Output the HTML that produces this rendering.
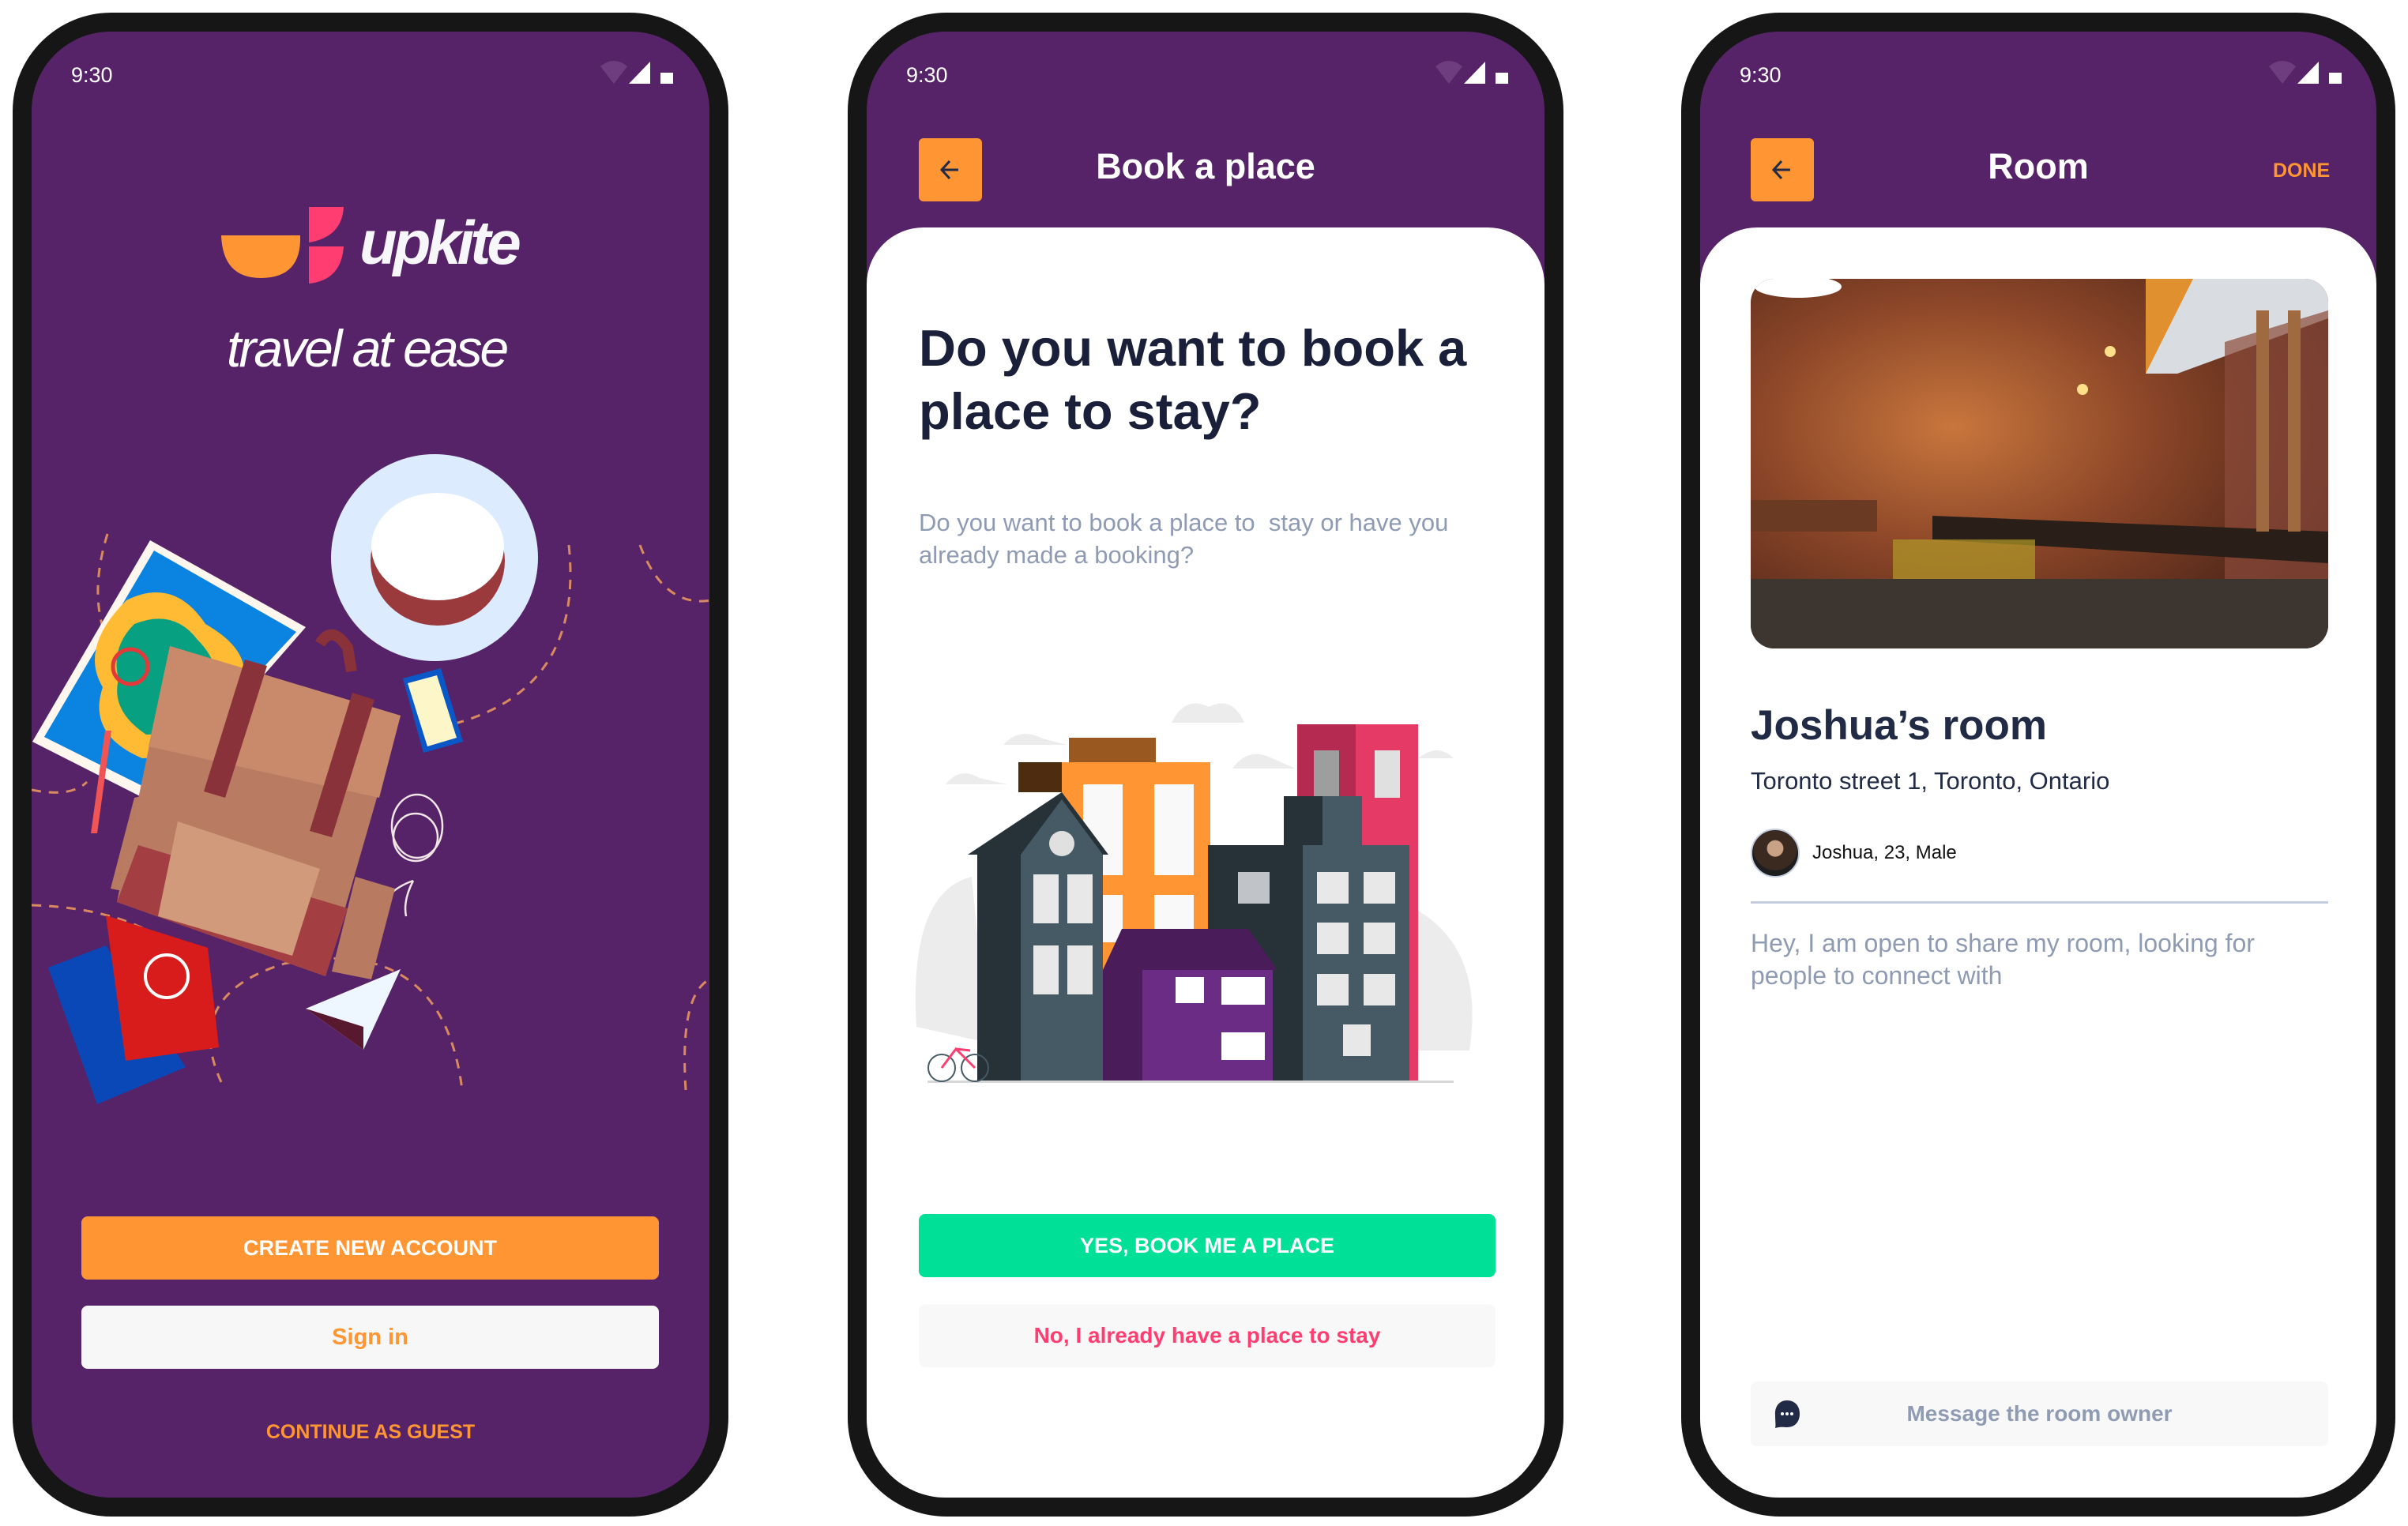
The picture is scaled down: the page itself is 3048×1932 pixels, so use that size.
<!DOCTYPE html>
<html><head><meta charset="utf-8">
<style>
*{margin:0;padding:0;box-sizing:border-box}
body{width:3048px;height:1932px;background:#fff;position:relative;overflow:hidden;font-family:"Liberation Sans",sans-serif}
.frame{position:absolute;top:16px;width:906px;height:1904px;background:#161616;border-radius:125px}
.screen{position:absolute;top:40px;width:858px;height:1856px;background:#562368;border-radius:100px;overflow:hidden}
.abs{position:absolute}
.time{position:absolute;left:50px;top:40px;color:#fff;font-size:27px}
.btn{position:absolute;border-radius:8px;display:flex;align-items:center;justify-content:center;font-weight:bold}
.card{position:absolute;left:0;top:248px;width:858px;height:1700px;background:#fff;border-radius:72px 72px 0 0}
.back{position:absolute;top:135px;width:80px;height:80px;background:#ff9533;border-radius:6px}
.title{position:absolute;top:145px;color:#fff;font-weight:bold;font-size:45px;width:858px;text-align:center;left:0}
</style></head><body>

<!-- PHONE 1 -->
<div class="frame" style="left:16px"></div>
<div class="screen" style="left:40px">
  <div class="time">9:30</div>
  <svg class="abs" style="left:0;top:0" width="858" height="1856" viewBox="40 40 858 1856">
    <path d="M760 84 Q777 70 794 84 L777 106 Z" fill="#6e3d80"/>
    <path d="M823 78 L823 106 L796 106 Z" fill="#fff"/>
    <rect x="836" y="92" width="16" height="14" fill="#fff"/>
    <path d="M280 298 L380 298 Q382 352 330 352 Q282 352 280 298 Z" fill="#ff9533"/>
    <path d="M391 262 L435 262 Q433 300 391 307 Z" fill="#ff3d71"/>
    <path d="M391 312 L435 312 Q432 355 391 359 Z" fill="#ff3d71"/>
    <g fill="none" stroke="#d98a5f" stroke-width="3" stroke-dasharray="12 10">
      <path d="M136 676 Q110 760 140 820"/>
      <path d="M720 690 Q740 880 560 920"/>
      <path d="M810 690 Q840 770 900 760"/>
      <path d="M40 1000 Q90 1010 110 990"/>
      <path d="M40 1146 Q160 1150 220 1200"/>
      <path d="M280 1370 Q230 1260 360 1220 Q560 1180 585 1380"/>
      <path d="M868 1380 Q860 1260 898 1240"/>
    </g>
    <polygon points="190,684 387,794 193,1016 41,939" fill="#fff6ee"/>
    <polygon points="195,697 375,800 190,1000 56,933" fill="#0a84e0"/>
    <path d="M160 760 Q220 730 260 790 Q330 830 300 880 Q250 960 180 960 Q110 930 130 870 Q100 820 160 760Z" fill="#ffbb33"/>
    <path d="M170 790 Q220 770 250 810 Q290 850 260 890 Q230 930 185 930 Q140 900 150 860 Q140 820 170 790Z" fill="#07a080"/>
    <circle cx="165" cy="844" r="22" fill="none" stroke="#e23a3a" stroke-width="5"/>
    <path d="M133 925 L141 925 L123 1055 L115 1055 Z" fill="#f05454"/>
    <circle cx="550" cy="706" r="131" fill="#dcebfd"/>
    <ellipse cx="554" cy="710" rx="85" ry="82" fill="#9b3a3c"/>
    <ellipse cx="554" cy="692" rx="84" ry="68" fill="#fff"/>
    <polygon points="510,859 558,846 586,939 536,953" fill="#0a58c8"/>
    <polygon points="516,865 553,855 578,934 541,945" fill="#fdf6c8"/>
    <g fill="none" stroke="#f0e6e6" stroke-width="2.5">
      <ellipse cx="528" cy="1046" rx="32" ry="40"/>
      <ellipse cx="526" cy="1060" rx="28" ry="30"/>
      <path d="M523 1115 Q480 1130 478 1170"/><path d="M523 1115 Q510 1140 514 1160"/>
    </g>
    <path d="M405 815 Q420 790 440 820 L445 850" fill="none" stroke="#8a3239" stroke-width="14"/>
    <polygon points="170,1010 215,1000 190,1135 140,1125" fill="#b87a60"/>
    <polygon points="450,1110 500,1125 470,1240 420,1230" fill="#b87a60"/>
    <polygon points="215,818 507,906 412,1236 148,1142" fill="#b97c62"/>
    <polygon points="148,1142 412,1236 440,1150 175,1070" fill="#a33f43"/>
    <polygon points="215,818 507,906 480,1010 188,945" fill="#c98a6c"/>
    <polygon points="225,1040 405,1100 370,1210 200,1160" fill="#d19a7a"/>
    <polygon points="310,835 338,843 285,1010 258,1002" fill="#8a3239"/>
    <polygon points="446,877 474,886 420,1060 392,1052" fill="#8a3239"/>
    <polygon points="61,1225 134,1197 235,1351 123,1398" fill="#0a48b8"/>
    <polygon points="134,1159 263,1200 277,1326 159,1343" fill="#d81c1c"/>
    <circle cx="211" cy="1236" r="27" fill="none" stroke="#fff" stroke-width="4"/>
    <polygon points="387,1277 507,1227 460,1329" fill="#eef6ff"/>
    <polygon points="387,1277 460,1300 460,1329" fill="#58192f"/>
  </svg>
  <div class="abs" style="left:415px;top:228px;color:#f7f7fb;font-size:78px;font-weight:bold;font-style:italic;letter-spacing:-5px;line-height:1">upkite</div>
  <div class="abs" style="left:247px;top:368px;color:#fff;font-size:66px;font-style:italic;font-weight:300;letter-spacing:-3px;line-height:1">travel at ease</div>
  <div class="btn" style="left:63px;top:1500px;width:731px;height:80px;background:#ff9533;color:#fff;font-size:27px">CREATE NEW ACCOUNT</div>
  <div class="btn" style="left:63px;top:1613px;width:731px;height:80px;background:#f7f7f7;color:#ff9533;font-size:29px">Sign in</div>
  <div class="abs" style="left:0;width:858px;text-align:center;top:1759px;color:#ff9533;font-weight:bold;font-size:25px">CONTINUE AS GUEST</div>
</div>

<!-- PHONE 2 -->
<div class="frame" style="left:1073px"></div>
<div class="screen" style="left:1097px">
  <div class="time">9:30</div>
  <svg class="abs" style="left:0;top:0" width="858" height="120"><path d="M720 44 Q737 30 754 44 L737 66 Z" fill="#6e3d80"/><path d="M783 38 L783 66 L756 66 Z" fill="#fff"/><rect x="796" y="52" width="16" height="14" fill="#fff"/></svg>
  <div class="back" style="left:66px"><svg width="80" height="80"><path d="M50 40 H30 M39 29 L29 40 L39 51" fill="none" stroke="#222b45" stroke-width="3"/></svg></div>
  <div class="title">Book a place</div>
  <div class="card">
    <div class="abs" style="left:66px;top:113px;color:#1a1f3a;font-weight:bold;font-size:65px;line-height:80px;width:790px">Do you want to book a place to stay?</div>
    <div class="abs" style="left:66px;top:353px;color:#8f9bb3;font-size:31px;line-height:41px;width:740px">Do you want to book a place to&nbsp; stay or have you already made a booking?</div>
    <svg class="abs" style="left:0;top:0" width="858" height="1200" viewBox="1097 288 858 1200">
      <g fill="#ececec">
        <path d="M1160 1300 Q1150 1130 1230 1110 L1250 1320Z"/>
        <path d="M1790 1150 Q1880 1200 1860 1330 L1790 1330Z"/>
        <path d="M1483 915 Q1500 880 1530 895 Q1560 880 1575 915Z"/>
        <path d="M1270 943 Q1290 920 1320 935 L1350 943Z"/>
        <path d="M1560 973 Q1580 945 1610 960 L1640 973Z"/>
        <path d="M1197 993 Q1215 970 1240 985 L1275 993Z"/>
        <path d="M1795 960 Q1820 940 1840 960Z"/>
      </g>
      <rect x="1642" y="917" width="153" height="453" fill="#e53a66"/>
      <rect x="1642" y="917" width="74" height="453" fill="#b52a50"/>
      <rect x="1663" y="950" width="32" height="60" fill="#9e9e9e"/><rect x="1740" y="950" width="32" height="60" fill="#e0e0e0"/>
      <rect x="1353" y="934" width="110" height="31" fill="#985820"/>
      <rect x="1289" y="965" width="55" height="38" fill="#4d2c10"/>
      <rect x="1344" y="965" width="188" height="405" fill="#ff9533"/>
      <rect x="1371" y="993" width="50" height="115" fill="#f9f9f9"/><rect x="1461" y="993" width="50" height="115" fill="#f9f9f9"/>
      <rect x="1371" y="1133" width="50" height="60" fill="#f9f9f9"/><rect x="1461" y="1133" width="50" height="60" fill="#f9f9f9"/>
      <rect x="1625" y="1008" width="50" height="70" fill="#263238"/>
      <rect x="1674" y="1008" width="50" height="70" fill="#455a64"/>
      <rect x="1529" y="1070" width="121" height="300" fill="#263238"/>
      <rect x="1649" y="1070" width="135" height="300" fill="#455a64"/>
      <g fill="#e8e8e8"><rect x="1667" y="1104" width="40" height="40"/><rect x="1726" y="1104" width="40" height="40"/><rect x="1667" y="1168" width="40" height="40"/><rect x="1726" y="1168" width="40" height="40"/><rect x="1667" y="1233" width="40" height="40"/><rect x="1726" y="1233" width="40" height="40"/><rect x="1700" y="1297" width="35" height="40"/></g>
      <rect x="1567" y="1104" width="40" height="40" fill="#c0c4c8"/>
      <polygon points="1225,1082 1344,1003 1403,1082" fill="#263238"/>
      <polygon points="1292,1082 1344,1012 1396,1082" fill="#455a64"/>
      <rect x="1237" y="1082" width="55" height="288" fill="#263238"/>
      <rect x="1292" y="1082" width="104" height="288" fill="#455a64"/>
      <circle cx="1344" cy="1068" r="16" fill="#e0e0e0"/>
      <g fill="#e8e8e8"><rect x="1308" y="1107" width="32" height="62"/><rect x="1351" y="1107" width="32" height="62"/><rect x="1308" y="1197" width="32" height="62"/><rect x="1351" y="1197" width="32" height="62"/></g>
      <polygon points="1396,1228 1420,1176 1580,1176 1617,1228" fill="#4a1c5a"/>
      <rect x="1396" y="1228" width="50" height="142" fill="#4a1c5a"/>
      <rect x="1446" y="1228" width="165" height="142" fill="#6a2c85"/>
      <rect x="1488" y="1237" width="36" height="33" fill="#fff"/><rect x="1546" y="1237" width="55" height="35" fill="#fff"/><rect x="1546" y="1307" width="55" height="35" fill="#fff"/>
      <rect x="1174" y="1368" width="666" height="3" fill="#d8d8d8"/>
      <circle cx="1192" cy="1352" r="17" fill="none" stroke="#455a64" stroke-width="2"/><circle cx="1234" cy="1352" r="17" fill="none" stroke="#455a64" stroke-width="2"/>
      <path d="M1192 1352 L1210 1328 L1234 1352 M1210 1328 L1228 1330" stroke="#ff3d71" stroke-width="3" fill="none"/>
    </svg>
  </div>
  <div class="btn" style="left:66px;top:1497px;width:730px;height:80px;background:#00e096;color:#fff;font-size:27px">YES, BOOK ME A PLACE</div>
  <div class="btn" style="left:66px;top:1611px;width:730px;height:80px;background:#f8f8f8;color:#ff3d71;font-size:28px">No, I already have a place to stay</div>
</div>

<!-- PHONE 3 -->
<div class="frame" style="left:2128px;width:904px"></div>
<div class="screen" style="left:2152px;width:856px">
  <div class="time">9:30</div>
  <svg class="abs" style="left:0;top:0" width="856" height="120"><path d="M720 44 Q737 30 754 44 L737 66 Z" fill="#6e3d80"/><path d="M783 38 L783 66 L756 66 Z" fill="#fff"/><rect x="796" y="52" width="16" height="14" fill="#fff"/></svg>
  <div class="back" style="left:64px"><svg width="80" height="80"><path d="M50 40 H30 M39 29 L29 40 L39 51" fill="none" stroke="#222b45" stroke-width="3"/></svg></div>
  <div class="title" style="width:856px">Room</div>
  <div class="abs" style="left:725px;top:162px;color:#ff9533;font-weight:bold;font-size:25px">DONE</div>
  <div class="card" style="width:856px">
    <svg class="abs" style="left:64px;top:65px" width="731" height="468" viewBox="0 0 731 468">
      <defs>
        <radialGradient id="g1" cx="0.35" cy="0.4" r="0.7"><stop offset="0" stop-color="#c8763c"/><stop offset="0.5" stop-color="#8a4528"/><stop offset="1" stop-color="#4a2418"/></radialGradient>
        <clipPath id="c"><rect width="731" height="468" rx="30"/></clipPath>
      </defs>
      <g clip-path="url(#c)">
        <rect width="731" height="468" fill="url(#g1)"/>
        <polygon points="500,0 731,0 731,50 540,120 500,120" fill="#d9dde2"/>
        <polygon points="500,0 560,0 500,120" fill="#e0902e"/>
        <polygon points="600,80 731,40 731,468 600,468" fill="#8c4a3a" opacity="0.7"/>
        <rect x="0" y="280" width="160" height="40" fill="#6a3a22"/>
        <polygon points="230,300 731,320 731,360 230,330" fill="#2a1e18"/>
        <rect x="0" y="380" width="731" height="88" fill="#3c3530"/>
        <rect x="180" y="330" width="180" height="50" fill="#b09a28" opacity="0.7"/>
        <circle cx="455" cy="92" r="7" fill="#ffe08a"/><circle cx="420" cy="140" r="7" fill="#ffe08a"/>
        <ellipse cx="60" cy="10" rx="55" ry="14" fill="#fff"/>
        <rect x="640" y="40" width="16" height="280" fill="#a06a40"/><rect x="680" y="40" width="16" height="280" fill="#a06a40"/>
      </g>
    </svg>
    <div class="abs" style="left:64px;top:600px;color:#222b45;font-weight:bold;font-size:53px">Joshua’s room</div>
    <div class="abs" style="left:64px;top:683px;color:#222b45;font-size:31px">Toronto street 1, Toronto, Ontario</div>
    <div class="abs" style="left:64px;top:761px;width:62px;height:62px;border-radius:50%;background:radial-gradient(circle at 50% 40%,#c9a184 0 22%,#3a2a20 24% 60%,#1e1e1e 62%);border:2px solid #c5cee0"></div>
    <div class="abs" style="left:142px;top:778px;color:#111;font-size:24px">Joshua, 23, Male</div>
    <div class="abs" style="left:64px;top:853px;width:731px;height:3px;background:#c5cee0"></div>
    <div class="abs" style="left:64px;top:886px;color:#8f9bb3;font-size:32px;line-height:41px;width:700px">Hey, I am open to share my room, looking for people to connect with</div>
  </div>
  <div class="btn" style="left:64px;top:1709px;width:731px;height:82px;background:#f8f8f8;color:#8f9bb3;font-size:28px">Message the room owner</div>
  <svg class="abs" style="left:90px;top:1730px" width="40" height="40"><path d="M20 3 C30 3 36 10 36 20 C36 30 30 37 20 37 C16 37 12 36 5 38 C6 34 5 30 5 22 C4 11 10 3 20 3Z" fill="#222b45"/><circle cx="14" cy="20" r="2" fill="#fff"/><circle cx="20" cy="20" r="2" fill="#fff"/><circle cx="26" cy="20" r="2" fill="#fff"/></svg>
</div>
</body></html>
